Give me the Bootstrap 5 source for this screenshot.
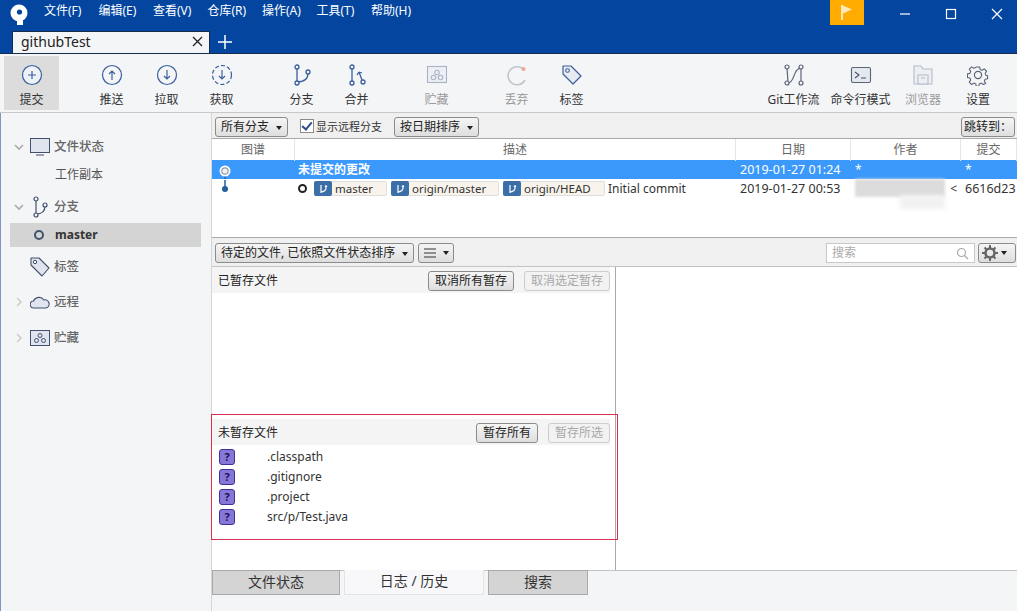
<!DOCTYPE html>
<html lang="zh-CN">
<head>
  <meta charset="UTF-8" />
  <meta name="viewport" content="width=device-width, initial-scale=1.0"/>
  <title>Sourcetree</title>
  <link href="https://cdn.jsdelivr.net/npm/bootstrap@5.3.3/dist/css/bootstrap.min.css" rel="stylesheet">
  <style>
    html, body { height: 100%; overflow: hidden; }
    body { font-family: "Noto Sans", "Noto Sans CJK SC", sans-serif; font-size: 12px; color: #333; background: #f4f5f7; }
    .app-shell { width: 1017px; height: 611px; overflow: hidden; position: relative; }

    /* title bar */
    .title-bar { height: 54px; background: #04469f; border-bottom: 1px solid #172b4d; flex: none; position: relative; }
    .menu-row { height: 31px; }
    .app-logo { width: 44px; padding-left: 10px; padding-top: 4px; }
    .menu-list { padding-top: 2px; }
    .menu-item { color: #fff; font-size: 12px; line-height: 18px; margin-right: 10.5px; white-space: nowrap; width: 44px; }
    .win-group { margin-right: -3px; }
    .flag-btn { width: 34px; height: 25px; background: #ffab00; margin-right: 18px; }
    .win-btn { width: 46px; height: 28px; }
    .tab-row { height: 22px; padding-left: 12px; }
    .repo-tab { width: 198px; height: 22px; background: #f4f5f7; border-top: 1px solid #172b4d; border-left: 1px solid #172b4d; border-right: 1px solid #172b4d; padding: 0 6px 3px 8px; font-size: 14px; color: #222; }
    .tab-add { margin-left: 8px; }

    /* main toolbar */
    .tool-bar { height: 59px; background: #f4f5f7; border-bottom: 1px solid #c8c8c8; flex: none; padding: 2px 11.5px 0 4px; }
    .tool-btn { width: 55px; height: 54px; padding-top: 8px; white-space: nowrap; }
    .tool-btn.is-on { background: #dcdcdc; }
    .tool-btn.is-off .tool-label { color: #9a9a9a; }
    .tool-btn.w-git { width: 64px; }
    .tool-btn.w-cmd { width: 70px; }
    .tool-gap { margin-left: 25px; }
    .tool-label { font-size: 12px; line-height: 17px; margin-top: 5px; color: #333; }

    /* sidebar */
    .side-bar { width: 212px; flex: none; background: #f4f5f7; border-left: 1px solid #7f97bd; border-right: 1px solid #d5d5d5; padding-top: 20px; }
    .side-row { height: 28px; padding-left: 12px; color: #666; font-size: 12.5px; white-space: nowrap; }
    .side-row .side-chev { width: 12px; flex: none; }
    .side-row .side-icon { width: 24px; flex: none; margin-left: 5px; }
    .side-row.side-head { font-weight: 500; }
    .side-sub { padding-left: 54px; font-size: 12px; font-weight: 400; color: #555; }
    .side-master { height: 24px; margin: 2px 10px 6px 9px; padding-left: 24px; background: #d4d4d4; color: #333; font-weight: 700; font-size: 12px; }
    .side-master .side-dot { width: 10px; height: 10px; border: 2px solid #42526e; border-radius: 50%; margin-right: 11px; }
    .gap-a { margin-top: 4px; }
    .gap-b { margin-top: 7px; }
    .gap-c { margin-top: 8px; }

    /* work area */
    .work-area { flex: 1; min-width: 0; }
    .filter-bar { height: 26px; background: #f0f0f0; border-bottom: 1px solid #a9a9a9; padding: 3px 2px 0 3px; flex: none; }
    .qt-btn { font-size: 12px; line-height: 16px; padding: 1px 5px; height: 20px; color: #222; background: linear-gradient(#f5f5f5, #dedede); border: 1px solid #8b8b8b; border-radius: 3px; white-space: nowrap; }
    .qt-btn:disabled { color: #a8a8a8; background: #f2f2f2; border-color: #cdcdcd; opacity: 1; }
    .qt-btn.dropdown-toggle::after { border-top-width: .34em; border-right-width: .3em; border-left-width: .3em; margin-left: 7px; vertical-align: .12em; }
    .qt-btn.jump-btn { padding: 1px 2px; }
    .qt-btn.menu-btn { padding: 1px 4px; }
    .qt-btn.menu-btn.dropdown-toggle::after { margin-left: 6px; }
    .check-label { margin-left: 12px; margin-right: 12px; white-space: nowrap; font-size: 11px; line-height: 20px; }
    .check-label .form-check-input { width: 14px; height: 14px; margin: 0 2px 0 0; border-radius: 0; border-color: #8b8b8b; background-color: #fff; vertical-align: -2px; background-image: none; position: relative; }
    .check-label .form-check-input:checked::after { content: ""; position: absolute; left: 3px; top: 0; width: 6px; height: 10px; border: solid #2f4d8e; border-width: 0 2px 2px 0; transform: rotate(40deg); }

    .log-grid { display: grid; grid-template-columns: 83px 441px 115px 110px 1fr; }
    .log-head { height: 21px; background: #fff; color: #666; line-height: 22px; text-align: center; }
    .log-head > div { border-right: 1px solid #e6e6e6; }
    .log-row { height: 19px; line-height: 20px; font-size: 12px; background: #fff; color: #333; overflow: hidden; white-space: nowrap; }
    .log-row.is-sel { background: #3b99fc; color: #fff; }
    .log-row > div { padding-left: 4px; overflow: hidden; }
    .log-row > .desc-cell { padding-left: 3px; }
    .log-row > .num-cell { font-size: 12.5px; }
    .log-pane { height: 99px; flex: none; background: #fff; border-bottom: 1px solid #a9a9a9; position: relative; overflow: hidden; }
    .graph-cell { position: relative; padding: 0 !important; }
    .ref-chip { height: 15px; display: inline-flex; align-items: center; background: #f8f4ec; border: 1px solid #dedede; border-left: 0; border-radius: 2px; margin-right: 4px; line-height: 13px; font-size: 11.5px; flex: none; }
    .chip-master { width: 73px; }
    .chip-origin { width: 108px; }
    .chip-head { width: 102px; margin-right: 3px; }
    .ref-icon { width: 18px; height: 15px; background: #3c6fa8; border-radius: 2px; margin-right: 3px; flex: none; }
    .head-ring { width: 9px; height: 9px; border: 2px solid #222; border-radius: 50%; display: inline-block; margin-right: 7px; flex: none; }
    .author-smear { position: absolute; left: 643px; top: 40px; width: 90px; height: 18px; background: #dcdcdc; filter: blur(1.5px); }
    .author-smear-b { position: absolute; left: 688px; top: 56px; width: 45px; height: 14px; background: #f1f1f1; filter: blur(2px); }

    .stage-bar { height: 29px; background: #f0f0f0; border-bottom: 1px solid #c4c4c4; padding: 2px 1px 0 3px; flex: none; }
    .search-field { width: 149px; height: 20px; border: 1px solid #c9c9c9; background: #fff; padding: 0 5px; color: #aaa; font-size: 12px; margin-right: 3px; }
    .qt-btn.gear-btn { width: 38px; padding: 1px 3px; }
    .qt-btn.gear-btn.dropdown-toggle::after { margin-left: 3px; }
    .stage-panes { height: 303px; flex: none; background: #fff; }
    .stage-left { width: 404px; flex: none; border-right: 1px solid #a9a9a9; }
    .stage-right { flex: 1; background: #fff; }
    .stage-head { height: 26px; background: #f4f4f4; margin-right: 5px; padding: 2px 0 0 6px; font-size: 12px; color: #222; flex: none; }
    .stage-head .qt-btn { margin-left: 10px; padding: 1px 6px; }
    .staged-fill { height: 126px; flex: none; }
    .file-list { padding-top: 2px; }
    .file-row { height: 20px; font-size: 12px; color: #333; }
    .file-mark { width: 16px; height: 16px; margin-left: 7px; margin-right: 32px; background: #8777d9; border: 1px solid #403294; border-radius: 3px; color: #1d1452; font-weight: 700; font-size: 11px; line-height: 14px; text-align: center; flex: none; }
    .red-frame { position: absolute; left: 211px; top: 414px; width: 407px; height: 126px; border: 1px solid #d9304f; pointer-events: none; }

    .bottom-tabs { height: 26px; flex: none; border-top: 1px solid #c4c4c4; background: #f4f5f7; }
    .view-tab { height: 25px; margin-top: -1px; text-align: center; line-height: 22px; font-size: 14px; color: #333; background: #d4d4d4; border: 1px solid #a9a9a9; }
    .view-tab.tab-a { width: 128px; }
    .view-tab.tab-b { width: 140px; margin: -1px 4px 0; background: #f8f8fa; border-color: #e4e4e4; border-top: 0; }
    .view-tab.tab-c { width: 100px; }
  </style>
</head>
<body>
<div class="app-shell d-flex flex-column">

  <header class="title-bar">
    <div class="menu-row d-flex align-items-start">
      <div class="app-logo">
        <svg width="18" height="21" viewBox="0 0 18 21"><circle cx="9" cy="9" r="8.5" fill="#fff"/><rect x="7" y="12" width="6" height="9" fill="#fff"/><circle cx="9.500" cy="8" r="2.600" fill="#04469f"/></svg>
      </div>
      <div class="menu-list d-flex">
        <span class="menu-item">文件(F)</span>
        <span class="menu-item">编辑(E)</span>
        <span class="menu-item">查看(V)</span>
        <span class="menu-item">仓库(R)</span>
        <span class="menu-item">操作(A)</span>
        <span class="menu-item">工具(T)</span>
        <span class="menu-item">帮助(H)</span>
      </div>
      <div class="win-group ms-auto d-flex align-items-start">
        <div class="flag-btn d-flex align-items-center justify-content-center">
          <svg width="14" height="17" viewBox="0 0 14 17"><path d="M2 1v15" stroke="#fff" stroke-width="1.400"/><path d="M3 1.500l9 4-9 4z" fill="#ffe9b8"/></svg>
        </div>
        <div class="win-btn d-flex align-items-center justify-content-center"><svg width="12" height="12"><path d="M1 6h10" stroke="#fff" stroke-width="1.200"/></svg></div>
        <div class="win-btn d-flex align-items-center justify-content-center"><svg width="12" height="12"><rect x="1.500" y="1.500" width="9" height="9" fill="none" stroke="#fff" stroke-width="1.200"/></svg></div>
        <div class="win-btn d-flex align-items-center justify-content-center"><svg width="12" height="12"><path d="M1 1l10 10M11 1L1 11" stroke="#fff" stroke-width="1.200"/></svg></div>
      </div>
    </div>
    <div class="tab-row d-flex align-items-end">
      <div class="repo-tab d-flex align-items-center justify-content-between">
        <span>githubTest</span>
        <svg width="11" height="11"><path d="M1 1l9 9M10 1L1 10" stroke="#222" stroke-width="1.300"/></svg>
      </div>
      <svg class="tab-add mb-1" width="14" height="14"><path d="M7 0v14M0 7h14" stroke="#fff" stroke-width="1.500"/></svg>
    </div>
  </header>

  <nav class="tool-bar d-flex align-items-start">
    <div class="tool-btn is-on d-flex flex-column align-items-center">
      <svg width="22" height="22" viewBox="0 0 22 22"><circle cx="11" cy="11" r="9.500" fill="#eef1f6" stroke="#3a5f9e" stroke-width="1.200"/><path d="M11 7v8M7 11h8" stroke="#3a5f9e" stroke-width="1.200"/></svg>
      <span class="tool-label">提交</span>
    </div>
    <div class="tool-btn tool-gap d-flex flex-column align-items-center">
      <svg width="22" height="22" viewBox="0 0 22 22"><circle cx="11" cy="11" r="9.500" fill="#f4f5f7" stroke="#3a5f9e" stroke-width="1.200"/><path d="M11 16V7M8 10l3-3 3 3" fill="none" stroke="#3a5f9e" stroke-width="1.200"/></svg>
      <span class="tool-label">推送</span>
    </div>
    <div class="tool-btn d-flex flex-column align-items-center">
      <svg width="22" height="22" viewBox="0 0 22 22"><circle cx="11" cy="11" r="9.500" fill="#f4f5f7" stroke="#3a5f9e" stroke-width="1.200"/><path d="M11 6v9M8 12l3 3 3-3" fill="none" stroke="#3a5f9e" stroke-width="1.200"/></svg>
      <span class="tool-label">拉取</span>
    </div>
    <div class="tool-btn d-flex flex-column align-items-center">
      <svg width="22" height="22" viewBox="0 0 22 22"><circle cx="11" cy="11" r="9.500" fill="none" stroke="#3a5f9e" stroke-width="1.200" stroke-dasharray="4 2.200"/><path d="M11 6v9M8 12l3 3 3-3" fill="none" stroke="#3a5f9e" stroke-width="1.200"/></svg>
      <span class="tool-label">获取</span>
    </div>
    <div class="tool-btn tool-gap d-flex flex-column align-items-center">
      <svg width="22" height="22" viewBox="0 0 22 22"><g fill="#f4f5f7" stroke="#3a5f9e" stroke-width="1.300"><path d="M6 4v14" fill="none"/><path d="M6 18c7 0 11-3 11-9" fill="none"/><circle cx="6" cy="3" r="2"/><circle cx="6" cy="19" r="2"/><circle cx="17" cy="8" r="2"/></g></svg>
      <span class="tool-label">分支</span>
    </div>
    <div class="tool-btn d-flex flex-column align-items-center">
      <svg width="22" height="22" viewBox="0 0 22 22"><g fill="#f4f5f7" stroke="#3a5f9e" stroke-width="1.300"><path d="M6 4v14" fill="none"/><path d="M13 8l3 8M13 8l-2 3M13 8l3 1" fill="none"/><circle cx="6" cy="3" r="2"/><circle cx="6" cy="19" r="2"/><circle cx="17" cy="18" r="2"/></g></svg>
      <span class="tool-label">合并</span>
    </div>
    <div class="tool-btn is-off tool-gap d-flex flex-column align-items-center">
      <svg width="22" height="22" viewBox="0 0 22 22"><g fill="none" stroke="#aab4c4" stroke-width="1.100"><rect x="1.500" y="2.500" width="19" height="16" fill="#eceff4"/><circle cx="11" cy="8.500" r="2.200"/><circle cx="7.500" cy="13.500" r="2.200"/><circle cx="14.500" cy="13.500" r="2.200"/></g></svg>
      <span class="tool-label">贮藏</span>
    </div>
    <div class="tool-btn is-off tool-gap d-flex flex-column align-items-center">
      <svg width="22" height="22" viewBox="0 0 22 22"><path d="M17 5A9 9 0 1 0 19 16" fill="none" stroke="#c0c5cc" stroke-width="1.600"/><circle cx="17.500" cy="5" r="2" fill="#f0a49a"/></svg>
      <span class="tool-label">丢弃</span>
    </div>
    <div class="tool-btn d-flex flex-column align-items-center">
      <svg width="22" height="22" viewBox="0 0 22 22"><path d="M2 2h8l10 10-8 8L2 10z" fill="#e8ebf2" stroke="#3a5f9e" stroke-width="1.200" stroke-linejoin="round"/><circle cx="6.500" cy="6.500" r="1.800" fill="#f4f5f7" stroke="#3a5f9e" stroke-width="1.100"/></svg>
      <span class="tool-label">标签</span>
    </div>

    <div class="tool-btn w-git ms-auto d-flex flex-column align-items-center">
      <svg width="22" height="22" viewBox="0 0 22 22"><g fill="#f4f5f7" stroke="#5a6478" stroke-width="1.200"><path d="M4 4l1 14M18 4v14M5 19c7 0 5-15 13-15" fill="none"/><circle cx="4" cy="3" r="2"/><circle cx="4" cy="19" r="2"/><circle cx="18" cy="3" r="2"/><circle cx="18" cy="19" r="2"/></g></svg>
      <span class="tool-label">Git工作流</span>
    </div>
    <div class="tool-btn w-cmd d-flex flex-column align-items-center">
      <svg width="22" height="22" viewBox="0 0 22 22"><rect x="1.500" y="3.500" width="19" height="15" rx="1.500" fill="#e4e8ef" stroke="#5a6478" stroke-width="1.100"/><path d="M5 8l4 3-4 3M11 14h5" fill="none" stroke="#42526e" stroke-width="1.100"/></svg>
      <span class="tool-label">命令行模式</span>
    </div>
    <div class="tool-btn is-off d-flex flex-column align-items-center">
      <svg width="22" height="22" viewBox="0 0 22 22"><g fill="#eceff4" stroke="#b4bbc7" stroke-width="1.100"><path d="M2 2h7l2 3h9v15H2z"/><path d="M6 11h10v9H6z"/><path d="M9 14h4"/></g></svg>
      <span class="tool-label">浏览器</span>
    </div>
    <div class="tool-btn d-flex flex-column align-items-center">
      <svg width="22" height="22" viewBox="0 0 22 22"><path d="M9 1.500h4l.6 3 2.300 1 2.600-1.700 2.800 2.800-1.700 2.600 1 2.300 1.900.5v3.500l-2.900.6-1 2.300 1.700 2.600-2.800 1.400-2.600-1.700-2.300 1-.6 2.800H9l-.6-2.800-2.300-1-2.600 1.700-2.800-2.800 1.700-2.600-1-2.300-2.900-.6V9.700l2.900-.6 1-2.300-1.700-2.600 2.800-2.800 2.600 1.700 2.300-1z" transform="translate(1.700 1.700) scale(.84)" fill="none" stroke="#5a6478" stroke-width="1.300" stroke-linejoin="round"/><circle cx="11" cy="11" r="3.600" fill="none" stroke="#5a6478" stroke-width="1.200"/></svg>
      <span class="tool-label">设置</span>
    </div>
  </nav>

  <div class="d-flex flex-grow-1">
    <aside class="side-bar">
      <div class="side-row side-head d-flex align-items-center">
        <svg class="side-chev" width="12" height="8"><path d="M2 2l4 4 4-4" fill="none" stroke="#aaa" stroke-width="1.600"/></svg>
        <span class="side-icon"><svg width="20" height="20" viewBox="0 0 20 20"><rect x=".5" y="1.500" width="19" height="14" fill="#dfe4ee" stroke="#42526e"/><path d="M0 15.500h20M6 18h8" stroke="#42526e" stroke-width="1.200"/></svg></span>
        <span>文件状态</span>
      </div>
      <div class="side-row side-sub d-flex align-items-center">工作副本</div>
      <div class="side-row side-head gap-a d-flex align-items-center">
        <svg class="side-chev" width="12" height="8"><path d="M2 2l4 4 4-4" fill="none" stroke="#aaa" stroke-width="1.600"/></svg>
        <span class="side-icon"><svg width="20" height="22" viewBox="0 0 20 22"><g fill="#f4f5f7" stroke="#42526e" stroke-width="1.200"><path d="M6 4v14M6 18c6 0 9-3 9-8" fill="none"/><circle cx="6" cy="3" r="2"/><circle cx="6" cy="19" r="2"/><circle cx="15" cy="9" r="2"/></g></svg></span>
        <span>分支</span>
      </div>
      <div class="side-master d-flex align-items-center"><span class="side-dot"></span>master</div>
      <div class="side-row side-head d-flex align-items-center">
        <span class="side-chev"></span>
        <span class="side-icon"><svg width="20" height="20" viewBox="0 0 20 20"><path d="M1 1h8l10 10-7 8L1 8z" fill="#dfe4ee" stroke="#42526e" stroke-width="1.100" stroke-linejoin="round"/><circle cx="5" cy="5" r="1.700" fill="#f4f5f7" stroke="#42526e"/></svg></span>
        <span>标签</span>
      </div>
      <div class="side-row side-head gap-b d-flex align-items-center">
        <svg class="side-chev" width="12" height="12"><path d="M4 2l4 4-4 4" fill="none" stroke="#ccc" stroke-width="1.600"/></svg>
        <span class="side-icon"><svg width="20" height="14" viewBox="0 0 20 14"><path d="M4 13a3.500 3.500 0 0 1-.5-7A6 6 0 0 1 14 5a4 4 0 0 1 2 8z" fill="#dfe4ee" stroke="#42526e" stroke-width="1.100"/></svg></span>
        <span>远程</span>
      </div>
      <div class="side-row side-head gap-c d-flex align-items-center">
        <svg class="side-chev" width="12" height="12"><path d="M4 2l4 4-4 4" fill="none" stroke="#ccc" stroke-width="1.600"/></svg>
        <span class="side-icon"><svg width="20" height="18" viewBox="0 0 20 18"><g fill="none" stroke="#42526e" stroke-width="1"><rect x=".5" y="1.500" width="19" height="15" fill="#dfe4ee"/><circle cx="10" cy="6.500" r="2"/><circle cx="6.500" cy="11.500" r="2"/><circle cx="13.500" cy="11.500" r="2"/></g></svg></span>
        <span>贮藏</span>
      </div>
    </aside>

    <main class="work-area d-flex flex-column">
      <div class="filter-bar d-flex align-items-center">
        <button class="btn qt-btn dropdown-toggle" type="button">所有分支</button>
        <label class="check-label"><input class="form-check-input" type="checkbox" checked>显示远程分支</label>
        <button class="btn qt-btn dropdown-toggle" type="button">按日期排序</button>
        <button class="btn qt-btn jump-btn ms-auto" type="button">跳转到：</button>
      </div>

      <section class="log-pane">
        <div class="log-grid log-head"><div>图谱</div><div>描述</div><div>日期</div><div>作者</div><div>提交</div></div>
        <div class="log-grid log-row is-sel">
          <div class="graph-cell">
            <svg width="30" height="19"><path d="M13 10v9" stroke="#1f5f9e" stroke-width="1.500"/><circle cx="13" cy="10" r="5.500" fill="#fff"/><circle cx="13" cy="10" r="3.800" fill="#8f9aa8"/><circle cx="13" cy="10" r="2.600" fill="#eef0f3"/></svg>
          </div>
          <div class="desc-cell fw-bold">未提交的更改</div>
          <div class="num-cell">2019-01-27 01:24</div>
          <div>*</div>
          <div>*</div>
        </div>
        <div class="log-grid log-row">
          <div class="graph-cell">
            <svg width="30" height="19"><path d="M13 0v9" stroke="#1f5f9e" stroke-width="1.500"/><circle cx="13" cy="9" r="3" fill="#1f5f9e"/></svg>
          </div>
          <div class="desc-cell d-flex align-items-center">
            <span class="head-ring"></span>
            <span class="ref-chip chip-master"><span class="ref-icon d-flex align-items-center justify-content-center"><svg width="11" height="12" viewBox="0 0 11 12"><path d="M3 2v8M3 9c3 0 5-2 5-4" fill="none" stroke="#fff" stroke-width="1.200"/><circle cx="8" cy="3.500" r="1.200" fill="#fff"/></svg></span><span>master</span></span>
            <span class="ref-chip chip-origin"><span class="ref-icon d-flex align-items-center justify-content-center"><svg width="11" height="12" viewBox="0 0 11 12"><path d="M3 2v8M3 9c3 0 5-2 5-4" fill="none" stroke="#fff" stroke-width="1.200"/><circle cx="8" cy="3.500" r="1.200" fill="#fff"/></svg></span><span>origin/master</span></span>
            <span class="ref-chip chip-head"><span class="ref-icon d-flex align-items-center justify-content-center"><svg width="11" height="12" viewBox="0 0 11 12"><path d="M3 2v8M3 9c3 0 5-2 5-4" fill="none" stroke="#fff" stroke-width="1.200"/><circle cx="8" cy="3.500" r="1.200" fill="#fff"/></svg></span><span>origin/HEAD</span></span>
            <span>Initial commit</span>
          </div>
          <div class="num-cell">2019-01-27 00:53</div>
          <div class="text-end pe-1">&lt;</div>
          <div class="num-cell">6616d23</div>
        </div>
        <div class="author-smear"></div>
        <div class="author-smear-b"></div>
      </section>

      <div class="stage-bar d-flex align-items-center">
        <button class="btn qt-btn dropdown-toggle" type="button">待定的文件, 已依照文件状态排序</button>
        <button class="btn qt-btn menu-btn dropdown-toggle ms-1 d-flex align-items-center" type="button"><svg width="14" height="12"><path d="M1 2h12M1 6h12M1 10h12" stroke="#333" stroke-width="1"/></svg></button>
        <div class="search-field ms-auto d-flex align-items-center justify-content-between"><span>搜索</span><svg width="13" height="13"><circle cx="5.500" cy="5.500" r="4" fill="none" stroke="#aaa" stroke-width="1.200"/><path d="M8.500 8.500l3.500 3.500" stroke="#aaa" stroke-width="1.200"/></svg></div>
        <button class="btn qt-btn gear-btn dropdown-toggle d-flex align-items-center" type="button"><svg width="16" height="16" viewBox="0 0 16 16"><circle cx="8" cy="8" r="4.500" fill="none" stroke="#666" stroke-width="2.500"/><path d="M8 0v3M8 13v3M0 8h3M13 8h3M2.500 2.500l2 2M11.500 11.500l2 2M13.500 2.500l-2 2M4.500 11.500l-2 2" stroke="#666" stroke-width="2"/></svg></button>
      </div>

      <div class="stage-panes d-flex">
        <section class="stage-left d-flex flex-column">
          <div class="stage-head d-flex align-items-center">
            <span class="me-auto">已暂存文件</span>
            <button class="btn qt-btn" type="button">取消所有暂存</button>
            <button class="btn qt-btn" type="button" disabled>取消选定暂存</button>
          </div>
          <div class="staged-fill"></div>
          <div class="stage-head d-flex align-items-center">
            <span class="me-auto">未暂存文件</span>
            <button class="btn qt-btn" type="button">暂存所有</button>
            <button class="btn qt-btn" type="button" disabled>暂存所选</button>
          </div>
          <div class="file-list">
            <div class="file-row d-flex align-items-center"><span class="file-mark">?</span><span>.classpath</span></div>
            <div class="file-row d-flex align-items-center"><span class="file-mark">?</span><span>.gitignore</span></div>
            <div class="file-row d-flex align-items-center"><span class="file-mark">?</span><span>.project</span></div>
            <div class="file-row d-flex align-items-center"><span class="file-mark">?</span><span>src/p/Test.java</span></div>
          </div>
        </section>
        <section class="stage-right"></section>
      </div>

      <div class="bottom-tabs d-flex">
        <div class="view-tab tab-a">文件状态</div>
        <div class="view-tab tab-b">日志 / 历史</div>
        <div class="view-tab tab-c">搜索</div>
      </div>
    </main>
  </div>

  <div class="red-frame"></div>
</div>
<script src="https://cdn.jsdelivr.net/npm/bootstrap@5.3.3/dist/js/bootstrap.bundle.min.js"></script>
</body>
</html>
